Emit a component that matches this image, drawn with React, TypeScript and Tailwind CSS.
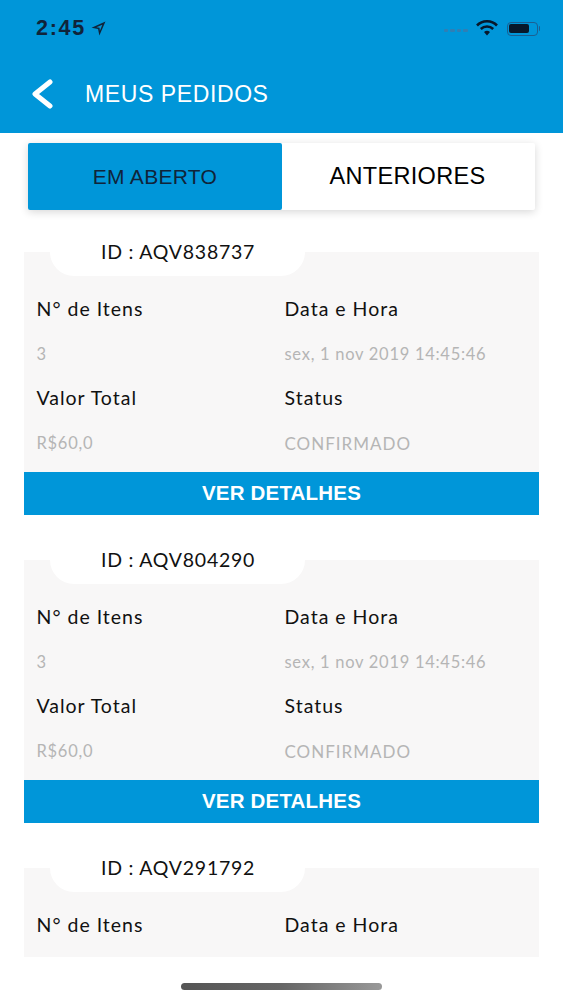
import React from "react";

const avenir = "font-['Lato','Noto_Sans',sans-serif]";

function Label({ children }: { children: React.ReactNode }) {
  return <div className="flex h-[44.5px] items-center pb-[1px] text-[19.5px] tracking-[1px] text-[#111]">{children}</div>;
}

function Value({ children, caps }: { children: React.ReactNode; caps?: boolean }) {
  return (
    <div className={`flex h-[44.5px] items-center pt-[2px] text-[#b5b5b5] ${caps ? "text-[17px] tracking-[1px]" : "text-[16.5px] tracking-[0.72px]"}`}>
      {children}
    </div>
  );
}

function Card({ id, clipped }: { id: string; clipped?: boolean }) {
  return (
    <div className="mx-[24px] mb-[23px] flex w-[515px] flex-col">
      <div className="relative z-10 ml-[26px] flex h-[46px] w-[255px] items-center rounded-b-[24px] bg-white pb-[2px] pl-[51px] text-[19.5px] tracking-[0.75px] text-[#111]">
        ID : {id}
      </div>
      <div className="-mt-[24px] bg-[#f8f7f7] pl-[12.5px] pt-[35px]">
        {clipped ? (
          <div className="grid h-[54px] grid-cols-[248px_1fr] content-start">
            <Label>N° de Itens</Label>
            <Label>Data e Hora</Label>
          </div>
        ) : (
          <div className="grid h-[185px] grid-cols-[248px_1fr] content-start">
            <Label>N° de Itens</Label>
            <Label>Data e Hora</Label>
            <Value>3</Value>
            <Value>sex, 1 nov 2019 14:45:46</Value>
            <Label>Valor Total</Label>
            <Label>Status</Label>
            <Value>R$60,0</Value>
            <Value caps>CONFIRMADO</Value>
          </div>
        )}
      </div>
      {!clipped && (
        <div className="flex h-[43px] items-center justify-center bg-[#0096d9] font-['Liberation_Sans',sans-serif] text-[20.5px] font-bold tracking-[0.2px] text-white">
          VER DETALHES
        </div>
      )}
    </div>
  );
}

export default function App() {
  return (
    <div className={`flex h-[1000px] w-[563px] flex-col overflow-hidden bg-white ${avenir}`}>
      <header className="h-[133px] shrink-0 bg-[#0096d9] font-['Liberation_Sans',sans-serif]">
        <div className="flex h-[57px] items-center justify-between pl-[36px] pr-[23px]">
          <div className="flex items-center gap-[5px]">
            <span className="text-[21.5px] font-bold tracking-[1.7px] text-[#10243a]">2:45</span>
            <svg width="15" height="15" viewBox="0 0 14 14" className="-mt-[1px]">
              <path d="M13.5 0.5 L0.5 6.2 L6.6 7.4 L7.8 13.5 Z M10.6 3.4 L5 5.9 L8 6.2 L8.3 9.2 Z" fill="#10243a" fillRule="evenodd" />
            </svg>
          </div>
          <div className="flex items-center">
            <div className="mr-[8px] mt-[4px] flex gap-[2px]">
              {[0, 1, 2, 3].map((i) => (
                <span key={i} className="h-[3px] w-[4.5px] rounded-[1px] bg-[#2f7fb5]" />
              ))}
            </div>
            <svg width="22" height="16" viewBox="0 0 22 16" className="mr-[9px] -mt-[1px]">
              <path d="M1 5.5 A14 14 0 0 1 21 5.5" fill="none" stroke="#07182b" strokeWidth="2.6" />
              <path d="M4.8 9 A9 9 0 0 1 17.2 9" fill="none" stroke="#07182b" strokeWidth="2.6" />
              <path d="M8 12 Q11 9.6 14 12 L11 15.5 Z" fill="#07182b" />
            </svg>
            <div className="flex h-[14px] w-[31px] items-center rounded-[4px] border border-[#1c5f91] p-[1.5px]">
              <div className="h-full w-[20px] rounded-[2px] bg-[#07182b]" />
            </div>
            <div className="ml-[1px] h-[5px] w-[1.5px] rounded-r-[1px] bg-[#1c5f91]" />
          </div>
        </div>
        <div className="flex h-[74px] items-center pl-[31px]">
          <svg width="22" height="30" viewBox="0 0 22 30">
            <path d="M19 3 L4 15 L19 27" fill="none" stroke="#fff" strokeWidth="5" strokeLinecap="round" strokeLinejoin="round" />
          </svg>
          <span className="ml-[32px] text-[23px] tracking-[0.6px] text-white">MEUS PEDIDOS</span>
        </div>
      </header>

      <div className="mx-[28px] mt-[10px] flex h-[67px] w-[507px] shrink-0 rounded-[2px] bg-white font-['Liberation_Sans',sans-serif] shadow-[0_2px_8px_rgba(0,0,0,0.16)]">
        <div className="flex w-[254px] items-center justify-center rounded-[2px] bg-[#0096d9] text-[21px] tracking-[0.3px] text-[#10243a]">
          EM ABERTO
        </div>
        <div className="flex flex-1 items-center justify-center pr-[2px] text-[23.5px] tracking-[0.3px] text-black">ANTERIORES</div>
      </div>

      <div className="mt-[20px] flex h-[727px] shrink-0 flex-col overflow-hidden">
        <Card id="AQV838737" />
        <Card id="AQV804290" />
        <Card id="AQV291792" clipped />
      </div>

      <div className="mx-auto mt-[26px] h-[7px] w-[201px] rounded-full bg-gradient-to-r from-[#555] via-[#666] to-[#999]" />
    </div>
  );
}
